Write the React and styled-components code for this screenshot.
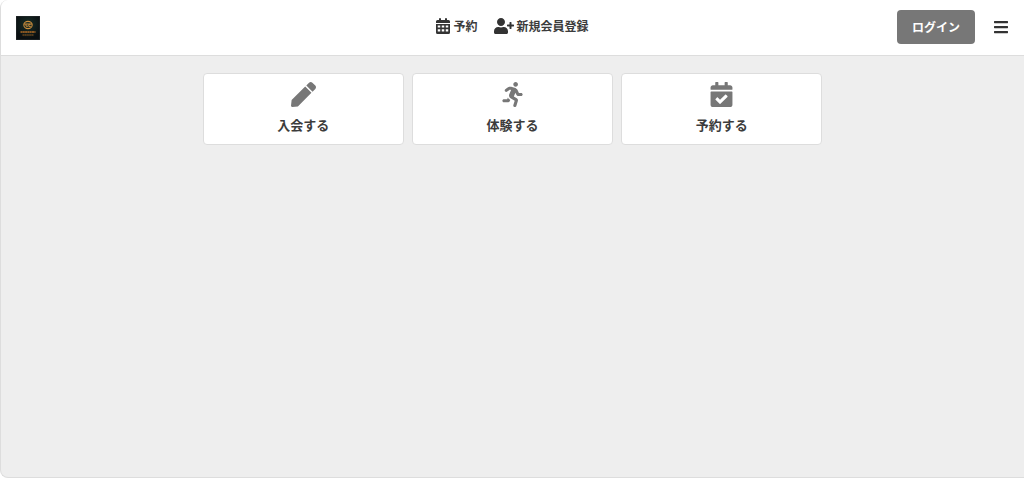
import styled, { createGlobalStyle } from "styled-components";
import { FaBars, FaCalendarCheck, FaPen, FaRunning, FaUserPlus } from "react-icons/fa";

const menus = [
    { label: "入会する", href: "#join", Icone: FaPen },
    { label: "体験する", href: "#trial", Icone: FaRunning },
    { label: "予約する", href: "#reserve", Icone: FaCalendarCheck },
];

function Logo() {
    return (
        <svg width="24" height="24" viewBox="0 0 24 24" aria-hidden="true">
            <defs>
                <radialGradient id="glow" cx="50%" cy="35%" r="60%">
                    <stop offset="0" stopColor="#183029" />
                    <stop offset="1" stopColor="#0a0f11" />
                </radialGradient>
            </defs>
            <rect width="24" height="24" fill="#2b3032" />
            <rect x="0.5" y="0.5" width="23" height="23" fill="url(#glow)" />
            <g fill="none" stroke="#c98a3a">
                <ellipse cx="12" cy="9" rx="4.2" ry="3.6" strokeWidth="1.1" />
                <path d="M8 8h8M10 8v2.2h2M14.5 8.4h-1.7v2h2" strokeWidth="1" />
                <path d="M4.5 16h15" strokeWidth="1.7" strokeDasharray="2 0.3" stroke="#b06a25" />
                <path d="M6.5 19h11" strokeWidth="1.1" strokeDasharray="1.6 0.3" stroke="#935c22" />
            </g>
        </svg>
    );
}

function Calendario() {
    return (
        <svg width="14" height="16" viewBox="0 0 448 512" fill="currentColor" aria-hidden="true">
            <path d="M96 32a32 32 0 0 1 64 0v32h128V32a32 32 0 0 1 64 0v32h48a48 48 0 0 1 48 48v48H0v-48a48 48 0 0 1 48-48h48z" />
            <path
                fillRule="evenodd"
                d="M0 192h448v272a48 48 0 0 1-48 48H48a48 48 0 0 1-48-48zM56 240v64h80v-64zM184 240v64h80v-64zM312 240v64h80v-64zM56 360v72h80v-72zM184 360v72h80v-72zM312 360v72h80v-72z"
            />
        </svg>
    );
}

export default function App() {
    return (
        <Tela>
            <GlobalStyle />
            <Topo>
                <LinkLogo href="#home" aria-label="ホーム">
                    <Logo />
                </LinkLogo>
                <Navegacao>
                    <LinkNav href="#reserve">
                        <Calendario />
                        予約
                    </LinkNav>
                    <LinkNav href="#signup">
                        <FaUserPlus size={20} />
                        新規会員登録
                    </LinkNav>
                </Navegacao>
                <Acoes>
                    <BotaoLogin type="button">ログイン</BotaoLogin>
                    <BotaoMenu type="button" aria-label="メニュー">
                        <FaBars size={16} />
                    </BotaoMenu>
                </Acoes>
            </Topo>
            <Cartoes>
                {menus.map(({ label, href, Icone }) => (
                    <Cartao key={href} href={href}>
                        <Icone size={25} />
                        <span>{label}</span>
                    </Cartao>
                ))}
            </Cartoes>
        </Tela>
    );
}

const GlobalStyle = createGlobalStyle`
    * {
        box-sizing: border-box;
    }
    body {
        margin: 0;
        background-color: #FFFFFF;
        color: #333333;
        font-family: "Noto Sans CJK JP", sans-serif;
    }
    a {
        color: inherit;
        text-decoration: none;
    }
    button {
        font-family: inherit;
        border: none;
        cursor: pointer;
    }
    svg {
        display: block;
    }
`;

const Tela = styled.div`
    min-height: 100vh;
    background-color: #EEEEEE;
    border: 1px solid #DDDDDD;
    border-width: 0 0 1px 1px;
    border-radius: 8px 0 0 8px;
    overflow: hidden;
`;

const Topo = styled.header`
    display: grid;
    grid-template-columns: 1fr auto 1fr;
    align-items: center;
    height: 56px;
    padding: 0 15px;
    background-color: #FFFFFF;
    border-bottom: 1px solid #DDDDDD;
`;

const LinkLogo = styled.a`
    justify-self: start;
`;

const Navegacao = styled.nav`
    display: flex;
    gap: 16px;
    padding-bottom: 3px;
`;

const LinkNav = styled.a`
    display: flex;
    align-items: center;
    gap: 3px;
    color: #3C3C3C;
    font-size: 12px;
    font-weight: 700;
    line-height: 20px;

    svg {
        color: #333333;
    }
`;

const Acoes = styled.div`
    display: flex;
    justify-content: flex-end;
    align-items: center;
    gap: 18px;
    padding-bottom: 1px;
`;

const BotaoLogin = styled.button`
    height: 34px;
    padding: 0 15px;
    background-color: #777777;
    color: #FFFFFF;
    border-radius: 4px;
    font-size: 12px;
    font-weight: 700;
    line-height: 20px;
`;

const BotaoMenu = styled.button`
    padding: 0;
    background: none;
    color: #333333;
`;

const Cartoes = styled.main`
    display: grid;
    grid-template-columns: repeat(3, 1fr);
    gap: 8px;
    max-width: 620px;
    margin: 17px auto;
`;

const Cartao = styled.a`
    display: flex;
    flex-direction: column;
    align-items: center;
    gap: 7px;
    padding: 8px;
    background-color: #FFFFFF;
    border: 1px solid #DDDDDD;
    border-radius: 4px;
    color: #3C3C3C;
    font-size: 13px;
    font-weight: 700;
    line-height: 22px;

    svg {
        color: #777777;
    }
`;
